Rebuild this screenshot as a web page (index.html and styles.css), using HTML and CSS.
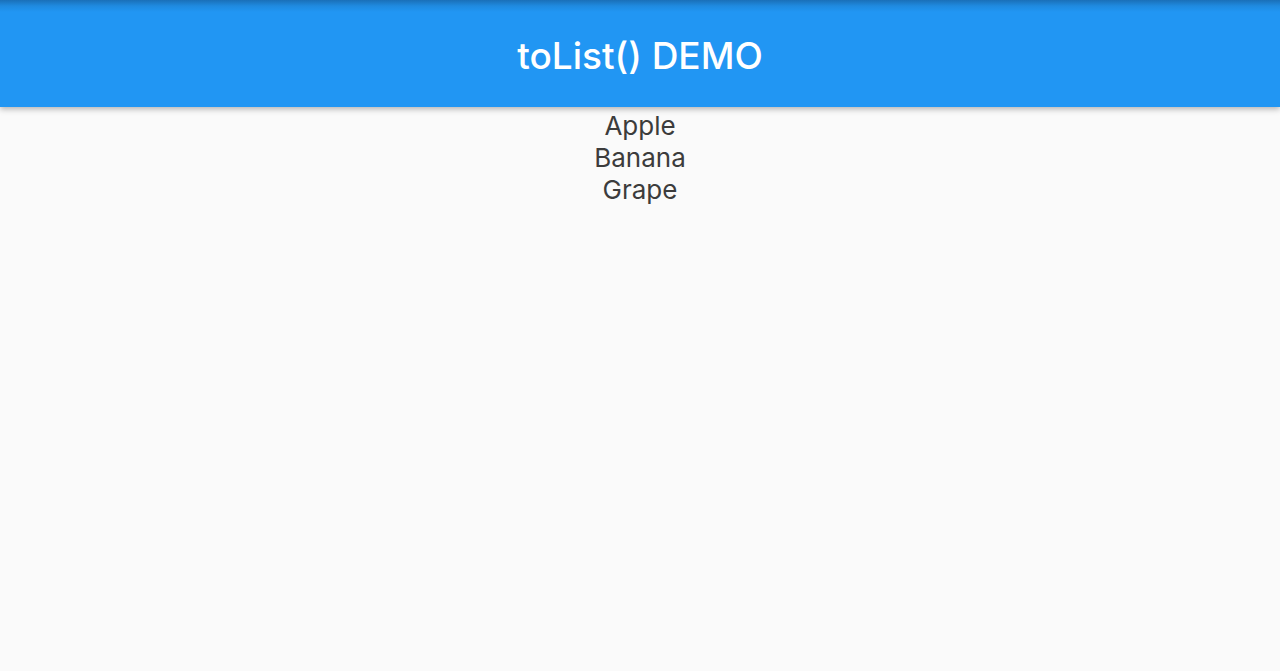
FILE: index.html
```html
<!DOCTYPE html>
<html lang="en">
<head>
    <meta charset="UTF-8">
    <meta name="viewport" content="width=device-width, initial-scale=1.0">
    <title>toList() DEMO</title>
    <link rel="stylesheet" href="styles.css">
</head>
<body>
    <header class="app-bar">
        <h1>toList() DEMO</h1>
    </header>

    <div class="fruit-list">
        <p>Apple</p>
        <p>Banana</p>
        <p>Grape</p>
    </div>
</body>
</html>
```

FILE: styles.css
```css
body {
    font-family: Inter, Roboto, 'Liberation Sans', sans-serif;
    margin: 0;
    padding: 0;
    background: #fafafa;
    min-height: 100vh;
}

.app-bar {
    height: 107px;
    background: linear-gradient(180deg, #1a6fb8 0px, #1f8ae0 6px, #2196f3 12px, #2196f3 100%);
    color: white;
    display: flex;
    justify-content: center;
    align-items: center;
    box-shadow: 0 2px 6px rgba(0, 0, 0, 0.3);
    position: relative;
}

.app-bar h1 {
    margin: 4px 0 0 0;
    font-size: 37px;
    font-weight: 500;
}

.fruit-list {
    text-align: center;
    color: #3c3c3c;
    padding-top: 110px;
    margin-top: -107px;
}

.fruit-list p {
    margin: 0;
    font-size: 26px;
    line-height: 32px;
}
```
